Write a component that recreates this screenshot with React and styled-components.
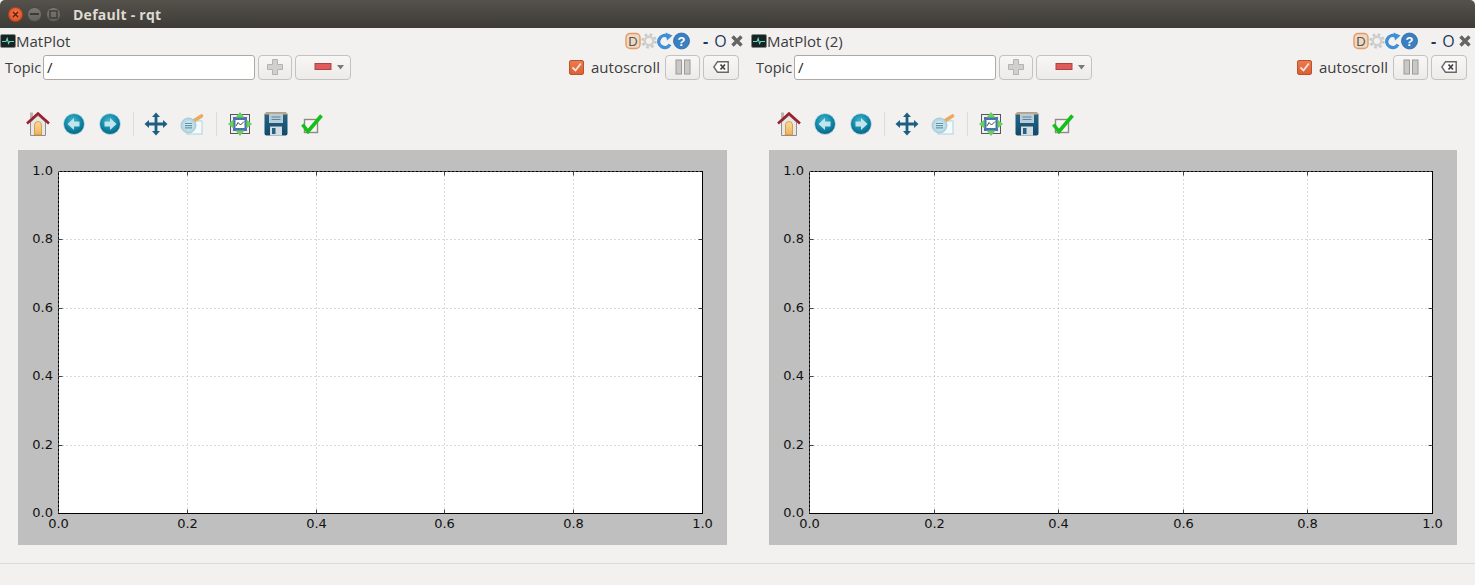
import React from 'react'
import styled, { createGlobalStyle } from 'styled-components'

const GlobalStyle = createGlobalStyle`
  html, body {
    margin: 0;
    padding: 0;
    background: #f2f1f0;
  }
  body {
    font-family: "Open Sans", "Noto Sans", sans-serif;
    overflow: hidden;
  }
`

const Window = styled.div`
  width: 1475px;
  height: 585px;
  display: flex;
  flex-direction: column;
  background: #f2f1f0;
  color: #3c3c3c;
`

const TitleBar = styled.div`
  height: 28px;
  flex: none;
  display: flex;
  align-items: center;
  padding-left: 8px;
  box-sizing: border-box;
  background: linear-gradient(#55524c, #3d3b37);
  border-radius: 5px 5px 0 0;
`

const WinButton = styled.div`
  width: 15px;
  height: 15px;
  margin-right: 4px;
  border-radius: 50%;
  display: flex;
  align-items: center;
  justify-content: center;
  box-sizing: border-box;
  border: 1px solid ${p => (p.$close ? '#b8411c' : '#4a4843')};
  background: ${p => (p.$close
    ? 'radial-gradient(circle at 50% 40%, #f2764a, #d8491f)'
    : 'linear-gradient(#7b7972, #63615b)')};
`

const WindowTitle = styled.div`
  margin-left: 8px;
  font-size: 14px;
  font-weight: 700;
  color: #dfdbd2;
  letter-spacing: 0.25px;
`

const Docks = styled.div`
  flex: 1;
  display: flex;
  gap: 4px;
`

const DockWrap = styled.div`
  width: ${p => p.$width}px;
  flex: none;
  display: flex;
  flex-direction: column;
`

const DockHeader = styled.div`
  height: 24px;
  margin-top: 1px;
  display: flex;
  align-items: center;
  font-size: 15px;
`

const DockTitle = styled.span`
  flex: 1;
`

const HeaderIcons = styled.div`
  display: flex;
  align-items: center;
  margin-right: 3px;
`

const HeaderGlyph = styled.span`
  width: 15px;
  display: flex;
  justify-content: center;
  font-size: 16px;
  line-height: 16px;
  font-weight: ${p => (p.$bold ? 700 : 400)};
  color: #1f3a5c;
  margin-left: ${p => p.$gap || 0}px;
`

const TopicRow = styled.div`
  height: 26px;
  margin-top: 1px;
  padding: 0 8px 0 5px;
  display: flex;
  align-items: center;
  font-size: 15px;
`

const TopicLabel = styled.label`
  width: 38px;
  flex: none;
  font-size: 14.5px;
`

const TopicInput = styled.div`
  width: ${p => p.$width}px;
  height: 25px;
  flex: none;
  box-sizing: border-box;
  padding-left: 3px;
  border: 1px solid #adaaa5;
  border-radius: 3px;
  background: #fff;
  font-size: 15px;
  line-height: 23px;
  color: #222;
`

const ToolButton = styled.button`
  width: ${p => p.$width}px;
  height: 25px;
  flex: none;
  margin-left: ${p => p.$gap}px;
  padding: 0;
  display: flex;
  align-items: center;
  justify-content: center;
  box-sizing: border-box;
  border: 1px solid #c4c2be;
  border-radius: 4px;
  background: linear-gradient(#f8f7f6, #ecebe9);
`

const Spacer = styled.div`
  flex: 1;
`

const CheckBox = styled.span`
  width: 15px;
  height: 15px;
  flex: none;
  display: flex;
  align-items: center;
  justify-content: center;
  border-radius: 2px;
  box-sizing: border-box;
  border: 1px solid #b9532d;
  background: linear-gradient(#ea7b4f, #dd5f33);
`

const CheckLabel = styled.span`
  margin-left: 7px;
  width: 68px;
  white-space: nowrap;
`

const Toolbar = styled.div`
  height: 70px;
  flex: none;
  box-sizing: border-box;
  padding: 29px 0 0 20px;
  display: flex;
  align-items: flex-start;
`

const ToolIcon = styled.div`
  width: 36px;
  height: 30px;
  flex: none;
  display: flex;
  align-items: center;
  justify-content: center;
`

const ToolSep = styled.div`
  width: ${p => p.$width}px;
  height: 24px;
  margin-top: 3px;
  flex: none;
  display: flex;
  justify-content: center;
  &::after {
    content: "";
    width: 1px;
    background: #dddbd8;
  }
`

const Canvas = styled.div`
  width: ${p => p.$width}px;
  height: 395px;
  margin-left: 18px;
  background: #bfbfbf;
`

const StatusBar = styled.div`
  height: 22px;
  flex: none;
  box-sizing: border-box;
  border-top: 1px solid #dcdad7;
`

const PlotSvg = styled.svg`
  display: block;
`

const TickText = styled.text`
  font-family: "DejaVu Sans", sans-serif;
  font-size: 13px;
  fill: #111;
`

const Defs = styled.svg`
  position: absolute;
  width: 0;
  height: 0;
`

const Gradients = () => (
  <Defs aria-hidden="true">
    <defs>
      <radialGradient id="nav" cx="45%" cy="35%" r="70%">
        <stop offset="0" stopColor="#3fb9cf" />
        <stop offset="0.6" stopColor="#0f83a3" />
        <stop offset="1" stopColor="#0a5c7c" />
      </radialGradient>
      <linearGradient id="floppy" x1="0" y1="0" x2="0" y2="1">
        <stop offset="0" stopColor="#256788" />
        <stop offset="1" stopColor="#124a68" />
      </linearGradient>
      <linearGradient id="door" x1="0" y1="0" x2="0" y2="1">
        <stop offset="0" stopColor="#f8dc9c" />
        <stop offset="1" stopColor="#efb158" />
      </linearGradient>
      <radialGradient id="lens" cx="50%" cy="50%" r="55%">
        <stop offset="0" stopColor="#e3f1f6" />
        <stop offset="1" stopColor="#a5cfdd" />
      </radialGradient>
    </defs>
  </Defs>
)

const HomeIcon = () => (
  <svg width="24" height="26" viewBox="0 0 24 26">
    <rect x="4" y="1.5" width="3" height="6" fill="#b9b4ac" />
    <path d="M4.5 11 L12 4.5 L19.5 11 V24.5 H4.5 Z" fill="#e9e7e2" stroke="#8b8f92" strokeWidth="1" />
    <path d="M8.5 24 V14 A3.5 3.5 0 0 1 15.5 14 V24 Z" fill="url(#door)" stroke="#c58a2a" strokeWidth="0.7" />
    <path d="M1 12.5 L12 2.5 L23 12.5" fill="none" stroke="#9c2130" strokeWidth="2.6" />
  </svg>
)

const NavIcon = ({ flip }) => (
  <svg width="22" height="22" viewBox="0 0 22 22">
    <circle cx="11" cy="11" r="10.5" fill="url(#nav)" stroke="#cfe3ea" strokeWidth="0.8" />
    <path
      d={flip ? 'M11 5 L17.5 11 L11 17 V13.5 H5.5 V8.5 H11 Z' : 'M11 5 L4.5 11 L11 17 V13.5 H16.5 V8.5 H11 Z'}
      fill="#c2e4ec"
    />
  </svg>
)

const PanIcon = () => (
  <svg width="24" height="24" viewBox="0 0 24 24">
    <path
      d="M12 0.5 L16 5 H13.4 V10.6 H19 V8 L23.5 12 L19 16 V13.4 H13.4 V19 H16 L12 23.5 L8 19 H10.6 V13.4 H5 V16 L0.5 12 L5 8 V10.6 H10.6 V5 H8 Z"
      fill="#1d5f82"
    />
  </svg>
)

const ZoomIcon = () => (
  <svg width="24" height="22" viewBox="0 0 24 22">
    <rect x="7" y="8" width="15" height="13" fill="#f5fbfc" stroke="#a5d6e2" strokeWidth="1" />
    <path d="M12 9 L21.5 3" stroke="#f0a95c" strokeWidth="3.6" strokeLinecap="round" />
    <circle cx="8.5" cy="12.5" r="7.5" fill="url(#lens)" stroke="#a9c9d6" strokeWidth="1" />
    <path d="M5 10.5 H12 M5 12.7 H12 M5 14.9 H12" stroke="#5e95ab" strokeWidth="1.2" />
  </svg>
)

const SubplotsIcon = () => (
  <svg width="24" height="24" viewBox="0 0 24 24">
    <rect x="2.5" y="2.5" width="19" height="19" fill="#f0efed" stroke="#55585a" strokeWidth="1" />
    <rect x="5" y="5" width="14" height="14" fill="#4d72b4" />
    <rect x="7.5" y="8" width="9" height="8" fill="#fff" />
    <path d="M8 14 L10 10.5 L12.5 13 L16 9.5" fill="none" stroke="#333" strokeWidth="0.9" />
    <path d="M12 0 L16.5 5.5 H7.5 Z M12 24 L16.5 18.5 H7.5 Z M0 12 L5.5 7.5 V16.5 Z M24 12 L18.5 7.5 V16.5 Z" fill="#66d05c" />
  </svg>
)

const SaveIcon = () => (
  <svg width="24" height="24" viewBox="0 0 24 24">
    <rect x="0.5" y="0.5" width="23" height="23" rx="2" fill="url(#floppy)" />
    <rect x="1" y="1" width="22" height="1.6" fill="#e0a062" />
    <rect x="5" y="2" width="14" height="9" fill="#b9cdd8" />
    <path d="M7.5 5 H16.5 M7.5 7.5 H16.5" stroke="#5d8398" strokeWidth="1.2" />
    <rect x="6" y="14.5" width="12" height="9" fill="#d3dde2" />
    <rect x="8" y="16" width="3.5" height="6" fill="#2a5f7d" />
  </svg>
)

const ApplyIcon = () => (
  <svg width="22" height="20" viewBox="0 0 22 20">
    <rect x="3.5" y="5.5" width="13" height="13" fill="#f6f5f3" stroke="#8a8a86" strokeWidth="1.4" />
    <path d="M1.5 10.5 L7 17.5 L20.5 1.5" fill="none" stroke="#12c016" strokeWidth="3.6" />
  </svg>
)

const MonitorIcon = () => (
  <svg width="16" height="14" viewBox="0 0 16 14">
    <rect x="0.5" y="0.5" width="15" height="13" rx="1.5" fill="#182424" stroke="#83878a" strokeWidth="1" />
    <path d="M2 7.5 H6 L7.2 4.5 L8.6 9.5 L9.6 7.5 H14" fill="none" stroke="#5fd6b8" strokeWidth="1.1" />
  </svg>
)

const DocIcon = () => (
  <svg width="16" height="18" viewBox="0 0 16 18">
    <rect x="1" y="1.5" width="14" height="15" rx="4" fill="#efd9c3" stroke="#e59a68" strokeWidth="1.4" />
    <text x="8" y="14" textAnchor="middle" fontFamily="Liberation Sans, sans-serif" fontSize="13" fill="#585858">D</text>
  </svg>
)

const GearIcon = () => (
  <svg width="16" height="18" viewBox="0 0 16 18">
    <circle cx="8" cy="9" r="6.4" fill="none" stroke="#c9c9c7" strokeWidth="2.6" strokeDasharray="2.6 2.4" />
    <circle cx="8" cy="9" r="4.2" fill="none" stroke="#cfcfcd" strokeWidth="2.4" />
  </svg>
)

const ReloadIcon = () => (
  <svg width="16" height="18" viewBox="0 0 16 18">
    <path d="M13 12.5 A6 6 0 1 1 10.5 4.2" fill="none" stroke="#3f8fd6" strokeWidth="3.4" />
    <path d="M8.5 0.5 L15.5 3.5 L10 8.5 Z" fill="#3f8fd6" />
  </svg>
)

const HelpIcon = () => (
  <svg width="17" height="18" viewBox="0 0 17 18">
    <circle cx="8.5" cy="9" r="8" fill="#3a7fc0" stroke="#2d6aa6" strokeWidth="0.8" />
    <text x="8.5" y="14" textAnchor="middle" fontFamily="Liberation Sans, sans-serif" fontWeight="700" fontSize="13" fill="#fff">?</text>
  </svg>
)

const CloseMark = () => (
  <svg width="14" height="14" viewBox="0 0 14 14">
    <path d="M2.5 2.5 L11.5 11.5 M11.5 2.5 L2.5 11.5" stroke="#646464" strokeWidth="3.4" />
  </svg>
)

const PlusIcon = () => (
  <svg width="16" height="16" viewBox="0 0 16 16">
    <path d="M5.5 0.5 H10.5 V5.5 H15.5 V10.5 H10.5 V15.5 H5.5 V10.5 H0.5 V5.5 H5.5 Z" fill="#d0d0ce" stroke="#b3b3b1" strokeWidth="1" />
  </svg>
)

const PauseIcon = () => (
  <svg width="16" height="16" viewBox="0 0 16 16">
    <rect x="1" y="1" width="5.5" height="14" fill="#c8c8c5" stroke="#9a9a97" strokeWidth="1" />
    <rect x="9.5" y="1" width="5.5" height="14" fill="#c8c8c5" stroke="#9a9a97" strokeWidth="1" />
  </svg>
)

const ClearIcon = () => (
  <svg width="16" height="12" viewBox="0 0 16 12">
    <path d="M4.5 0.8 H15.2 V11.2 H4.5 L0.8 6 Z" fill="#fff" stroke="#666" strokeWidth="1.4" />
    <path d="M7.5 3.5 L12 8.5 M12 3.5 L7.5 8.5" stroke="#444" strokeWidth="1.8" />
  </svg>
)

const TICKS = [0, 0.2, 0.4, 0.6, 0.8, 1]

// matplotlib axes with the old "classic" look, the canvas has no data yet
const Plot = ({ width, axesWidth }) => {
  const left = 40
  const top = 21
  const axesHeight = 342
  const right = left + axesWidth
  const bottom = top + axesHeight
  const xs = TICKS.map(t => Math.round(left + t * axesWidth) + 0.5)
  const ys = TICKS.map(t => Math.round(bottom - t * axesHeight) + 0.5)
  const x0 = left + 0.5
  const x1 = right + 0.5
  const y0 = top + 0.5
  const y1 = bottom + 0.5
  return (
    <PlotSvg width={width} height={395} viewBox={`0 0 ${width} 395`}>
      <rect x={x0} y={y0} width={axesWidth} height={axesHeight} fill="#fff" />
      {xs.slice(1, -1).map(x => (
        <line key={x} x1={x} x2={x} y1={y0} y2={y1} stroke="#b4b4b4" strokeDasharray="1 3" />
      ))}
      {ys.slice(1, -1).map(y => (
        <line key={y} x1={x0} x2={x1} y1={y} y2={y} stroke="#b4b4b4" strokeDasharray="1 3" />
      ))}
      <rect x={x0} y={y0} width={axesWidth} height={axesHeight} fill="none" stroke="#000" />
      <line x1={x0} x2={x1} y1={y0} y2={y0} stroke="#999" strokeDasharray="1 3" />
      <line x1={x0} x2={x0} y1={y0} y2={y1} stroke="#999" strokeDasharray="1 3" />
      {xs.slice(1, -1).map(x => (
        <path key={x} d={`M${x} ${y1} v-4 M${x} ${y0} v4`} stroke="#444" />
      ))}
      {ys.slice(1, -1).map(y => (
        <path key={y} d={`M${x0} ${y} h4 M${x1} ${y} h-4`} stroke="#444" />
      ))}
      {TICKS.map((t, i) => (
        <TickText key={t} x={xs[i]} y={378} textAnchor="middle">{t.toFixed(1)}</TickText>
      ))}
      {TICKS.map((t, i) => (
        <TickText key={t} x={35} y={ys[i] + 3} textAnchor="end">{t.toFixed(1)}</TickText>
      ))}
    </PlotSvg>
  )
}

const Dock = ({ title, width, inputWidth, canvasWidth, axesWidth }) => (
  <DockWrap $width={width}>
    <DockHeader>
      <MonitorIcon />
      <DockTitle>{title}</DockTitle>
      <HeaderIcons>
        <DocIcon />
        <GearIcon />
        <ReloadIcon />
        <HelpIcon />
        <HeaderGlyph $bold $gap={8}>-</HeaderGlyph>
        <HeaderGlyph>O</HeaderGlyph>
        <HeaderGlyph $gap={1}><CloseMark /></HeaderGlyph>
      </HeaderIcons>
    </DockHeader>
    <TopicRow>
      <TopicLabel>Topic</TopicLabel>
      <TopicInput $width={inputWidth}>/</TopicInput>
      <ToolButton $width={34} $gap={3}><PlusIcon /></ToolButton>
      <ToolButton $width={56} $gap={3}>
        <svg width="42" height="10" viewBox="0 0 42 10">
          <rect x="13" y="1.5" width="16" height="6" fill="#e05a5a" stroke="#a84646" strokeWidth="1" />
          <path d="M35 3 H42 L38.5 7.5 Z" fill="#7a7a78" />
        </svg>
      </ToolButton>
      <Spacer />
      <CheckBox>
        <svg width="11" height="11" viewBox="0 0 11 11">
          <path d="M1.5 5.5 L4.5 8.5 L9.8 1.5" fill="none" stroke="#fbe6dc" strokeWidth="1.8" />
        </svg>
      </CheckBox>
      <CheckLabel>autoscroll</CheckLabel>
      <ToolButton $width={35} $gap={6}><PauseIcon /></ToolButton>
      <ToolButton $width={36} $gap={3}><ClearIcon /></ToolButton>
    </TopicRow>
    <Toolbar>
      <ToolIcon><HomeIcon /></ToolIcon>
      <ToolIcon><NavIcon /></ToolIcon>
      <ToolIcon><NavIcon flip /></ToolIcon>
      <ToolSep $width={10} />
      <ToolIcon><PanIcon /></ToolIcon>
      <ToolIcon><ZoomIcon /></ToolIcon>
      <ToolSep $width={12} />
      <ToolIcon><SubplotsIcon /></ToolIcon>
      <ToolIcon><SaveIcon /></ToolIcon>
      <ToolIcon><ApplyIcon /></ToolIcon>
    </Toolbar>
    <Canvas $width={canvasWidth}>
      <Plot width={canvasWidth} axesWidth={axesWidth} />
    </Canvas>
  </DockWrap>
)

export default function App() {
  return (
    <Window>
      <GlobalStyle />
      <Gradients />
      <TitleBar>
        <WinButton $close>
          <svg width="7" height="7" viewBox="0 0 7 7">
            <path d="M1 1 L6 6 M6 1 L1 6" stroke="#5a1c08" strokeWidth="1.3" />
          </svg>
        </WinButton>
        <WinButton>
          <svg width="9" height="3" viewBox="0 0 9 3">
            <rect width="9" height="2" fill="#3c3b37" />
          </svg>
        </WinButton>
        <WinButton>
          <svg width="9" height="9" viewBox="0 0 9 9">
            <rect x="1" y="1" width="7" height="7" fill="none" stroke="#3c3b37" strokeWidth="1.4" />
          </svg>
        </WinButton>
        <WindowTitle>Default - rqt</WindowTitle>
      </TitleBar>
      <Docks>
        <Dock title="MatPlot" width={747} inputWidth={212} canvasWidth={709} axesWidth={644} />
        <Dock title="MatPlot (2)" width={724} inputWidth={202} canvasWidth={688} axesWidth={623} />
      </Docks>
      <StatusBar />
    </Window>
  )
}
